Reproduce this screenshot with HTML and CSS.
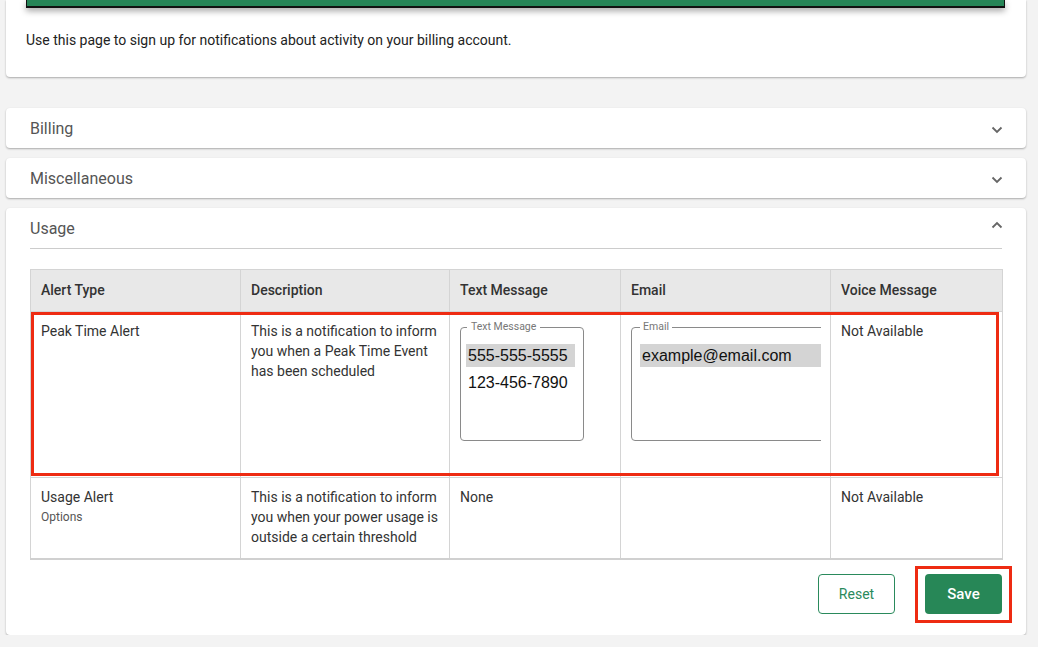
FILE: index.html
```html
<!doctype html>
<html lang="en">

    <head>
        <meta charset="UTF-8" />
        <title>Notifications</title>
        <link rel="stylesheet" href="styles.css">
    </head>

    <body>
        <div class="page">
            <div class="card intro">
                <div class="banner"></div>
                <p>Use this page to sign up for notifications about activity on your billing account.</p>
            </div>

            <div class="card panel first">
                <div class="panel_head">
                    <span>Billing</span>
                    <svg class="chev" width="12" height="8" viewBox="0 0 12 8"><path d="M1.5 1.5L6 6l4.5-4.5" /></svg>
                </div>
            </div>
            <div class="card panel">
                <div class="panel_head">
                    <span>Miscellaneous</span>
                    <svg class="chev" width="12" height="8" viewBox="0 0 12 8"><path d="M1.5 1.5L6 6l4.5-4.5" /></svg>
                </div>
            </div>

            <div class="card panel open">
                <div class="panel_head">
                    <span>Usage</span>
                    <svg class="chev up" width="12" height="8" viewBox="0 0 12 8"><path d="M1.5 6.5L6 2l4.5 4.5" /></svg>
                </div>

                <div class="table_wrap">
                    <table class="alerts">
                        <colgroup>
                            <col style="width:210px">
                            <col style="width:209px">
                            <col style="width:171px">
                            <col style="width:210px">
                            <col style="width:172px">
                        </colgroup>
                        <thead>
                            <tr>
                                <th>Alert Type</th>
                                <th>Description</th>
                                <th>Text Message</th>
                                <th>Email</th>
                                <th>Voice Message</th>
                            </tr>
                        </thead>
                        <tbody>
                            <tr class="peak">
                                <td>Peak Time Alert</td>
                                <td>This is a notification to inform you when a Peak Time Event has been scheduled</td>
                                <td>
                                    <fieldset class="field sms">
                                        <legend>Text Message</legend>
                                        <div class="options">
                                            <div class="opt sel">555-555-5555</div>
                                            <div class="opt">123-456-7890</div>
                                        </div>
                                    </fieldset>
                                </td>
                                <td>
                                    <div class="clip">
                                        <fieldset class="field mail">
                                            <legend>Email</legend>
                                            <div class="options">
                                                <div class="opt sel">example@email.com</div>
                                            </div>
                                        </fieldset>
                                    </div>
                                </td>
                                <td>Not Available</td>
                            </tr>
                            <tr>
                                <td>Usage Alert<div class="sub">Options</div></td>
                                <td>This is a notification to inform you when your power usage is outside a certain threshold</td>
                                <td>None</td>
                                <td></td>
                                <td>Not Available</td>
                            </tr>
                        </tbody>
                    </table>
                    <div class="mark_row"></div>
                </div>

                <div class="actions">
                    <button class="btn reset">Reset</button>
                    <span class="marked"><button class="btn save">Save</button></span>
                </div>
            </div>
        </div>
    </body>

</html>
```

FILE: styles.css
```css
* {
    padding: 0px;
    margin: 0px;
    box-sizing: border-box;
}

html,
body {
    font-family: Roboto, "Liberation Sans", sans-serif;
    font-size: 14px;
    color: #333;
    background: #f3f3f3;
}

.page {
    padding: 0 12px 0 6px;
}

.card {
    background: #fff;
    border-radius: 4px;
    box-shadow: 0 1px 2px rgba(0, 0, 0, 0.3);
}

.intro {
    border-radius: 0 0 4px 4px;
    padding: 0 21px 29px 20px;
}

.intro .banner {
    height: 8px;
    background: #268557;
    border: 1px solid #111;
    border-top: none;
    border-bottom-width: 2px;
    box-shadow: 0 3px 6px rgba(0, 0, 0, 0.35);
}

.intro p {
    margin-top: 24px;
    line-height: 16px;
    color: #222;
}

.panel {
    margin-top: 10px;
    padding: 0 24px;
}

.panel.first {
    margin-top: 31px;
}

.panel_head {
    height: 40px;
    display: flex;
    align-items: center;
    justify-content: space-between;
    font-size: 16px;
    color: #555;
}

.open .panel_head {
    height: 41px;
    border-bottom: 1px solid #ccc;
}

.chev {
    margin-top: 4px;
    margin-right: -1px;
}

.chev path {
    fill: none;
    stroke: #666;
    stroke-width: 1.8;
}

.chev.up {
    margin-top: -6px;
}

.table_wrap {
    position: relative;
    margin-top: 20px;
}

.alerts {
    width: 100%;
    table-layout: fixed;
    border-collapse: collapse;
    border: 1px solid #d4d4d4;
    border-bottom: 2px solid #d0d0d0;
}

.alerts th,
.alerts td {
    border: 1px solid #d4d4d4;
    padding: 9px 10px 11px;
    line-height: 20px;
    text-align: left;
    vertical-align: top;
}

.alerts th {
    background: #e8e8e8;
    font-weight: 500;
    color: #333;
    height: 42px;
    padding: 10px 10px;
}

.alerts td {
    color: #333;
}

.alerts tr.peak td {
    height: 166px;
}

.alerts .sub {
    font-size: 12px;
    color: #555;
}

.field {
    border: 1px solid #8a8a8a;
    border-radius: 4px;
    height: 120px;
}

.field legend {
    font-size: 10.5px;
    line-height: 12px;
    color: #777;
    padding: 0 4px;
}

.sms {
    width: 124px;
    padding: 0 8px 0 5px;
}

.sms legend {
    margin-left: 1px;
}

.clip {
    width: 190px;
    overflow: hidden;
}

.mail {
    width: 220px;
    padding: 0 8px;
}

.mail legend {
    padding: 0 3px;
}

.options {
    padding-top: 11px;
    font-family: "Liberation Sans", Arial, sans-serif;
    font-size: 16px;
    color: #111;
}

.opt {
    height: 23px;
    line-height: 23px;
    padding-left: 2px;
    margin-bottom: 4px;
    white-space: nowrap;
}

.opt.sel {
    background: #d4d4d4;
}

.mark_row {
    position: absolute;
    top: 43px;
    left: 1px;
    right: 3px;
    height: 164px;
    border: 3px solid #ee2b12;
}

.actions {
    display: flex;
    justify-content: flex-end;
    align-items: center;
    gap: 30px;
    padding: 14px 0 21px;
}

.btn {
    width: 77px;
    height: 40px;
    border-radius: 4px;
    font-family: Roboto, "Liberation Sans", sans-serif;
    cursor: pointer;
}

.reset {
    background: #fff;
    border: 1px solid #2a8a5c;
    color: #2a8a5c;
    font-size: 14px;
}

.save {
    background: #278757;
    border: none;
    color: #fff;
    font-size: 15px;
    font-weight: 500;
    display: block;
}

.marked {
    position: relative;
    display: block;
}

.marked::after {
    content: "";
    position: absolute;
    top: -8px;
    bottom: -9px;
    left: -10px;
    right: -10px;
    border: 3px solid #ee2b12;
}
```
